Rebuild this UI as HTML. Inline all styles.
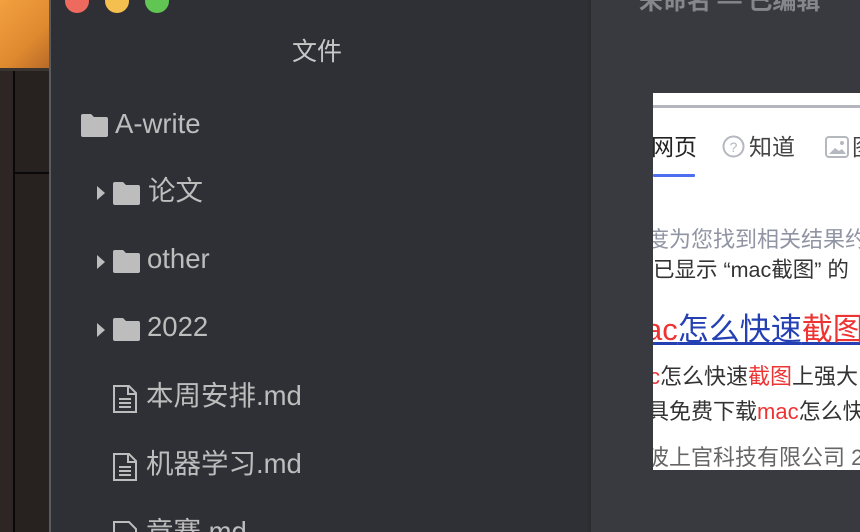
<!DOCTYPE html>
<html style="overflow:hidden;width:860px;height:532px"><head><meta charset="utf-8"><style>
*{margin:0;padding:0;box-sizing:border-box}
body{width:860px;height:532px;overflow:hidden;background:#2f3035;position:relative;font-family:"Liberation Sans","Noto Sans CJK SC",sans-serif}
.a{position:absolute;white-space:nowrap}
.it{position:absolute;font-size:27.5px;color:#bdbdbd;line-height:30px;white-space:nowrap}
.web{font-family:"Liberation Sans","Noto Sans CJK SC",sans-serif}
</style></head><body>
<div class="a" style="left:0;top:0;width:49px;height:68px;background:linear-gradient(135deg,#f2a040,#e08a30 60%,#b86a28)"></div>
<div class="a" style="left:0;top:68px;width:49px;height:3px;background:#3a3430"></div>
<div class="a" style="left:0;top:71px;width:13px;height:461px;background:#2e2624"></div>
<div class="a" style="left:13px;top:71px;width:2px;height:461px;background:#0a0808"></div>
<div class="a" style="left:15px;top:71px;width:34px;height:461px;background:#27211f"></div>
<div class="a" style="left:15px;top:172px;width:34px;height:2px;background:#0a0808"></div>
<div class="a" style="left:49px;top:0;width:2px;height:532px;background:#5a5b5f"></div>
<div class="a" style="left:65px;top:-11px;width:24px;height:24px;border-radius:50%;background:#ee6a5e"></div>
<div class="a" style="left:105px;top:-11px;width:24px;height:24px;border-radius:50%;background:#f5bf4f"></div>
<div class="a" style="left:145px;top:-11px;width:24px;height:24px;border-radius:50%;background:#61c554"></div>
<div class="a" style="left:292px;top:37px;font-size:25px;color:#c8c8c8;line-height:30px">文件</div>
<svg class="a" style="left:81px;top:114px" width="27" height="23" viewBox="0 0 27 23"><path d="M2 0h8l3 3h12a2 2 0 0 1 2 2v16a2 2 0 0 1-2 2H2a2 2 0 0 1-2-2V2a2 2 0 0 1 2-2z" fill="#bdbdbd"/></svg>
<div class="it" style="left:115px;top:109px">A-write</div>
<svg class="a" style="left:97px;top:186px" width="8" height="14"><path d="M0 0L8 7L0 14z" fill="#bdbdbd"/></svg>
<svg class="a" style="left:113px;top:182px" width="27" height="23" viewBox="0 0 27 23"><path d="M2 0h8l3 3h12a2 2 0 0 1 2 2v16a2 2 0 0 1-2 2H2a2 2 0 0 1-2-2V2a2 2 0 0 1 2-2z" fill="#bdbdbd"/></svg>
<div class="it" style="left:148px;top:176px">论文</div>
<svg class="a" style="left:97px;top:255px" width="8" height="14"><path d="M0 0L8 7L0 14z" fill="#bdbdbd"/></svg>
<svg class="a" style="left:113px;top:250px" width="27" height="23" viewBox="0 0 27 23"><path d="M2 0h8l3 3h12a2 2 0 0 1 2 2v16a2 2 0 0 1-2 2H2a2 2 0 0 1-2-2V2a2 2 0 0 1 2-2z" fill="#bdbdbd"/></svg>
<div class="it" style="left:147px;top:244px">other</div>
<svg class="a" style="left:97px;top:323px" width="8" height="14"><path d="M0 0L8 7L0 14z" fill="#bdbdbd"/></svg>
<svg class="a" style="left:113px;top:318px" width="27" height="23" viewBox="0 0 27 23"><path d="M2 0h8l3 3h12a2 2 0 0 1 2 2v16a2 2 0 0 1-2 2H2a2 2 0 0 1-2-2V2a2 2 0 0 1 2-2z" fill="#bdbdbd"/></svg>
<div class="it" style="left:147px;top:312px">2022</div>
<svg class="a" style="left:113px;top:385px" width="25" height="28" viewBox="0 0 25 28"><path d="M1 1h15l7 7v19H1z" fill="none" stroke="#bdbdbd" stroke-width="2"/><path d="M15 1v8h8M6 14h12M6 18h12M6 22h12" fill="none" stroke="#bdbdbd" stroke-width="2"/></svg>
<div class="it" style="left:146px;top:381px">本周安排.md</div>
<svg class="a" style="left:113px;top:453px" width="25" height="28" viewBox="0 0 25 28"><path d="M1 1h15l7 7v19H1z" fill="none" stroke="#bdbdbd" stroke-width="2"/><path d="M15 1v8h8M6 14h12M6 18h12M6 22h12" fill="none" stroke="#bdbdbd" stroke-width="2"/></svg>
<div class="it" style="left:146px;top:449px">机器学习.md</div>
<svg class="a" style="left:113px;top:521px" width="25" height="11" viewBox="0 0 25 11"><path d="M1 11V1h15l7 7v3" fill="none" stroke="#bdbdbd" stroke-width="2"/></svg>
<div class="it" style="left:146px;top:517px;height:15px;overflow:hidden">竞赛.md</div>
<div class="a" style="left:588px;top:0;width:3px;height:532px;background:#2b2c30"></div>
<div class="a" style="left:591px;top:0;width:269px;height:532px;background:#383a3f"></div>
<div class="a" style="left:639px;top:-12px;font-size:24px;font-weight:bold;color:#85878c;line-height:28px">未命名 — 已编辑</div>
<div class="a web" style="left:653px;top:93px;width:207px;height:377px;background:#fff;overflow:hidden">
  <div class="a" style="left:0;top:12px;width:207px;height:3px;background:#b3b6bd"></div>
  <div class="a" style="left:-2px;top:39px;font-size:23px;color:#222;line-height:30px">网页</div>
  <div class="a" style="left:0;top:81px;width:42px;height:3px;background:#4e6ef2;border-radius:1px"></div>
  <svg class="a" style="left:69px;top:42px" width="23" height="23"><circle cx="11.5" cy="11.5" r="10" fill="none" stroke="#b5b8bf" stroke-width="2"/><text x="11.5" y="17" font-size="14" text-anchor="middle" fill="#b5b8bf" font-family="Liberation Sans">?</text></svg>
  <div class="a" style="left:96px;top:39px;font-size:23px;color:#444;line-height:30px">知道</div>
  <svg class="a" style="left:172px;top:43px" width="24" height="22"><rect x="1" y="1" width="22" height="20" rx="3" fill="none" stroke="#b5b8bf" stroke-width="2"/><path d="M4 18l6-6 4 3 3-2 4 5z" fill="#b5b8bf"/><circle cx="17" cy="7" r="2" fill="#b5b8bf"/></svg>
  <div class="a" style="left:199px;top:39px;font-size:23px;color:#444;line-height:30px">图</div>
  <div class="a" style="left:-6px;top:135px;font-size:22px;color:#9195a3;line-height:24px">度为您找到相关结果约</div>
  <div class="a" style="left:0;top:165px;font-size:21.5px;color:#333;line-height:24px">已显示 “mac截图” 的</div>
  <div class="a" style="left:-8px;top:221px;font-size:31px;color:#2440b3;line-height:32px;text-decoration:underline"><span style="color:#e33">ac</span>怎么快速<span style="color:#e33">截图</span></div>
  <div class="a" style="left:-4px;top:272px;font-size:22px;color:#333;line-height:24px"><span style="color:#e33">c</span>怎么快速<span style="color:#e33">截图</span>上强大</div>
  <div class="a" style="left:-6px;top:307px;font-size:22px;color:#333;line-height:24px">具免费下载<span style="color:#e33">mac</span>怎么快</div>
  <div class="a" style="left:-6px;top:353px;font-size:22px;color:#666;line-height:24px">波上官科技有限公司 2</div>
</div>
</body></html>
